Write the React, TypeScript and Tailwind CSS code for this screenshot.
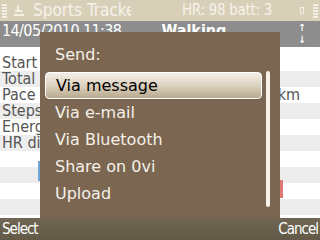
import React from "react";

const rows = ["Start time", "Total distance", "Pace avg", "Steps", "Energy", "HR distance", "", "", "", ""];
const items = ["Via message", "Via e-mail", "Via Bluetooth", "Share on 0vi", "Upload"];

export default function App() {
  return (
    <div
      className="relative w-[320px] h-[240px] overflow-hidden bg-white"
      style={{ fontFamily: '"DejaVu Sans", sans-serif' }}
    >
      {/* status bar */}
      <div className="h-[21px] flex items-center bg-[#d8cfb8] text-[#f6f2ea]">
        <div className="flex flex-col gap-[1px] ml-[2px] w-[5px]">
          {[0, 1, 2, 3, 4].map((i) => (
            <div key={i} className="h-[2px] bg-[#f4efe4]" />
          ))}
        </div>
        <svg width="10" height="12" viewBox="0 0 10 12" className="ml-[7px]">
          <rect x="3" y="0" width="2" height="5" fill="#f4efe4" />
          <rect x="1" y="5" width="7" height="2" fill="#f4efe4" />
          <rect x="0" y="9" width="10" height="2" fill="#f4efe4" />
        </svg>
        <span className="ml-[9px] w-[98px] overflow-hidden whitespace-nowrap text-[17px] leading-none font-['DejaVu_Sans_Condensed',sans-serif]">
          Sports Tracker
        </span>
        <span className="ml-auto mr-[28px] text-[15px] leading-none font-['DejaVu_Sans_Condensed',sans-serif] tracking-[-0.3px]">
          HR: 98 batt: 3
        </span>
        <div className="w-[4px] h-[7px] border border-[#f4efe4] mr-[9px]" />
        <div className="flex flex-col gap-[1px] mr-[2px] w-[5px]">
          {[0, 1, 2, 3, 4].map((i) => (
            <div key={i} className="h-[2px] bg-[#f4efe4]" />
          ))}
        </div>
      </div>

      {/* title bar */}
      <div className="h-[26px] flex items-start bg-[#8d8d8d] text-white pt-[1px] font-['DejaVu_Sans_Condensed',sans-serif]">
        <span className="ml-[2px] text-[16px] leading-[18px] tracking-[-0.6px]">14/05/2010 11:38</span>
        <span className="ml-[40px] text-[16px] leading-[18px] font-bold">Walking</span>
        <div className="ml-auto mr-[14px] flex flex-col items-center text-[10px] leading-[12px] font-bold">
          <span>↑</span>
          <span>↓</span>
        </div>
      </div>

      {/* content rows */}
      <div className="flex flex-col pt-[8px] font-['DejaVu_Sans_Condensed',sans-serif]">
        {rows.map((r, i) => (
          <div
            key={i}
            className={`h-[16px] flex items-center text-[16px] leading-none text-[#555] pl-[2px] ${
              i % 2 === 0 ? "bg-white" : "bg-[#ededed]"
            }`}
          >
            <span>{r}</span>
            {i === 2 && <span className="ml-auto mr-[20px]">km</span>}
          </div>
        ))}
      </div>

      <div className="absolute left-[38px] top-[161px] w-[3px] h-[20px] bg-[#6fa6d6]" />
      <div className="absolute left-[280px] top-[180px] w-[3px] h-[18px] bg-[#e07878]" />

      {/* send dialog */}
      <div className="absolute left-[40px] top-[32px] w-[240px] h-[186px] bg-[#7a6651] flex flex-col">
        <div className="h-[40px] pl-[15px] pt-[15px] text-[16px] leading-none text-[#f5f0e8]">Send:</div>
        <div className="flex flex-1">
          <div className="flex flex-col w-[222px] pl-[5px]">
            {items.map((it, i) => (
              <div
                key={it}
                className={`h-[27px] flex items-center pl-[10px] pt-[1px] text-[16px] leading-none ${
                  i === 0
                    ? "rounded-[4px] border border-white bg-gradient-to-b from-[#f3eee6] via-[#ddd2c0] to-[#b9aa8e] text-black"
                    : "text-[#f5f0e8]"
                }`}
              >
                {it}
              </div>
            ))}
          </div>
          <div className="ml-[4px] -mt-[1px] w-[4px] h-[136px] rounded-full bg-[#f6f2ea]" />
        </div>
      </div>

      {/* softkeys */}
      <div className="absolute left-0 bottom-0 w-[320px] h-[22px] flex items-center justify-between px-[2px] bg-gradient-to-b from-[#6f6753] to-[#625a47] text-white text-[15px] leading-none tracking-[-1px] font-['DejaVu_Sans_Condensed',sans-serif]">
        <span>Select</span>
        <span>Cancel</span>
      </div>
    </div>
  );
}
